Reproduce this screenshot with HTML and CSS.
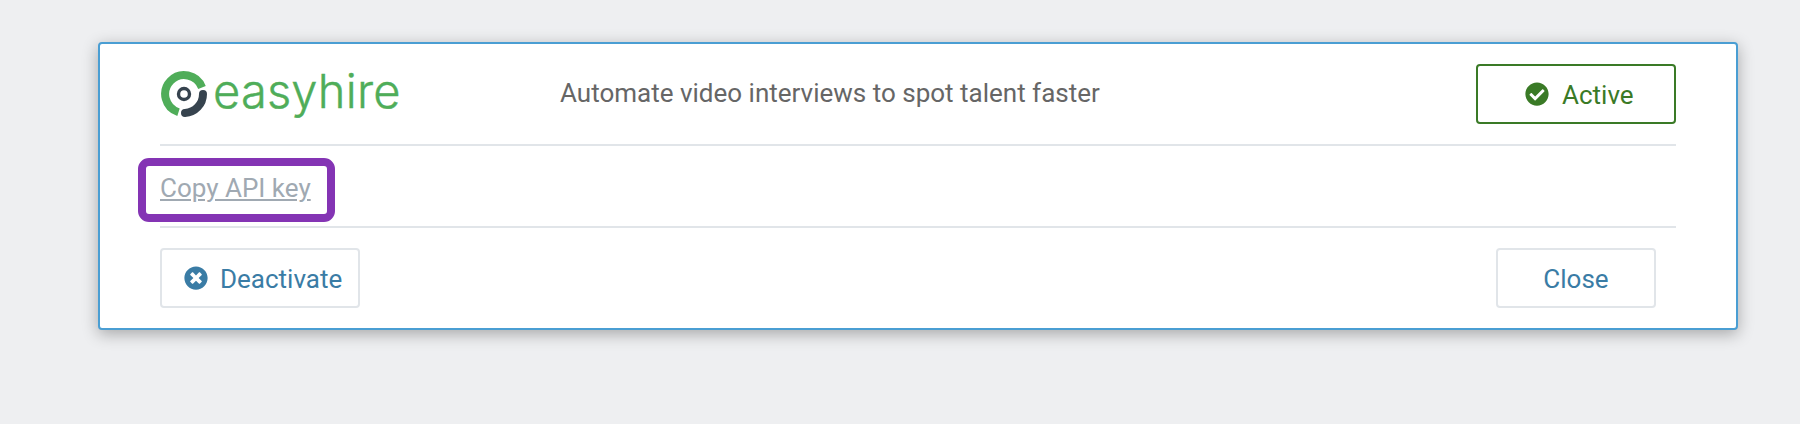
FILE: index.html
```html
<!DOCTYPE html>
<html lang="en">
<head>
<meta charset="utf-8">
<title>easyhire</title>
<link rel="stylesheet" href="styles.css">
</head>
<body>
<section class="card">
  <header class="row head">
    <div class="logo">
      <svg class="logo-mark" viewBox="0 0 48 48" width="48" height="48" aria-hidden="true">
        <path d="M18.5 42.2A19 19 0 1 1 42 17.5" fill="none" stroke="#4fad59" stroke-width="8"/>
        <path d="M43 24A19 19 0 0 1 25 43" fill="none" stroke="#36434e" stroke-width="8" stroke-linecap="round"/>
        <circle cx="24" cy="24" r="5.5" fill="#fff" stroke="#36434e" stroke-width="3.4"/>
      </svg>
      <span class="logo-text">easyhire</span>
    </div>
    <p class="tagline">Automate video interviews to spot talent faster</p>
    <div class="status">
      <svg class="icon" viewBox="0 0 512 512" aria-hidden="true"><path fill="currentColor" d="M504 256c0 136.967-111.033 248-248 248S8 392.967 8 256 119.033 8 256 8s248 111.033 248 248zM227.314 387.314l184-184c6.248-6.248 6.248-16.379 0-22.627l-22.627-22.627c-6.248-6.249-16.379-6.249-22.628 0L216 308.118l-70.059-70.059c-6.248-6.248-16.379-6.248-22.628 0l-22.627 22.627c-6.248 6.248-6.248 16.379 0 22.627l104 104c6.249 6.249 16.379 6.249 22.628.001z"/></svg>
      <span class="label">Active</span>
    </div>
  </header>
  <div class="row middle">
    <a class="copy" href="#">Copy API key</a>
  </div>
  <footer class="row foot">
    <button class="btn btn-deactivate" type="button">
      <svg class="icon" viewBox="0 0 512 512" aria-hidden="true"><path fill="currentColor" d="M256 8C119 8 8 119 8 256s111 248 248 248 248-111 248-248S393 8 256 8zm121.6 313.1c4.7 4.7 4.7 12.3 0 17L338 377.6c-4.7 4.7-12.3 4.7-17 0L256 312l-65.1 65.6c-4.7 4.7-12.3 4.7-17 0L134.4 338c-4.7-4.7-4.7-12.3 0-17l65.6-65-65.6-65.1c-4.7-4.7-4.7-12.3 0-17l39.6-39.6c4.7-4.7 12.3-4.7 17 0l65 65.7 65.1-65.6c4.7-4.7 12.3-4.7 17 0l39.6 39.6c4.7 4.7 4.7 12.3 0 17L312 256l65.6 65.1z"/></svg>
      <span class="label">Deactivate</span>
    </button>
    <button class="btn btn-close" type="button"><span class="label">Close</span></button>
  </footer>
</section>
</body>
</html>
```
FILE: styles.css
```css
* { box-sizing: border-box; }
html, body { margin: 0; height: 100%; }
body {
  background: #eeeff1;
  padding: 42px 62px 0 98px;
  font-family: Roboto, "Liberation Sans", sans-serif;
  font-size: 26px;
  overflow: hidden;
}
.card {
  background: #fff;
  border: 2px solid #4a9ed3;
  border-radius: 4px;
  box-shadow: 0 4px 16px rgba(0, 0, 0, 0.3);
  padding: 0 60px;
  height: 288px;
}
.row { display: flex; align-items: center; }
.head {
  padding-top: 20px;
  padding-bottom: 20px;
  box-sizing: content-box;
  height: 60px;
  border-bottom: 2px solid #e1e5e9;
}
.logo { display: flex; align-items: center; width: 400px; gap: 5px; }
.logo-mark { display: block; flex: none; }
.logo-text {
  font-family: Inter, sans-serif;
  font-weight: 300;
  font-size: 47px;
  letter-spacing: 0.2px;
  line-height: 54px;
  padding-bottom: 6px;
  color: #4fad59;
  -webkit-text-stroke: 0.4px #4fad59;
}
.tagline { margin: 0; color: #666; flex: 1; line-height: 58px; padding-bottom: 2px; }
.label { padding-top: 2px; }
.status {
  width: 200px;
  height: 60px;
  border: 2px solid #3a7a26;
  border-radius: 4px;
  color: #3a7a26;
  display: flex;
  align-items: center;
  padding-left: 47px;
  gap: 13px;
}
.icon { width: 24px; height: 24px; display: block; flex: none; }
.middle {
  height: 82px;
  padding-top: 8px;
  border-bottom: 2px solid #e1e5e9;
}
.copy {
  color: #a0a9b2;
  line-height: 44px;
  padding: 0 16px 4px 14px;
  margin-left: -14px;
  outline: 8px solid #8434b4;
  outline-offset: 0;
  border-radius: 3px;
}
.foot {
  justify-content: space-between;
  padding: 20px 20px 0 0;
}
.btn {
  height: 60px;
  background: #fff;
  border: 2px solid #e1e5e9;
  border-radius: 4px;
  color: #3a7ca5;
  font: inherit;
  display: flex;
  align-items: center;
  justify-content: center;
  padding: 0;
}
.btn-deactivate { width: 200px; gap: 12px; justify-content: flex-start; padding-left: 22px; }
.btn-close { width: 160px; }
```
